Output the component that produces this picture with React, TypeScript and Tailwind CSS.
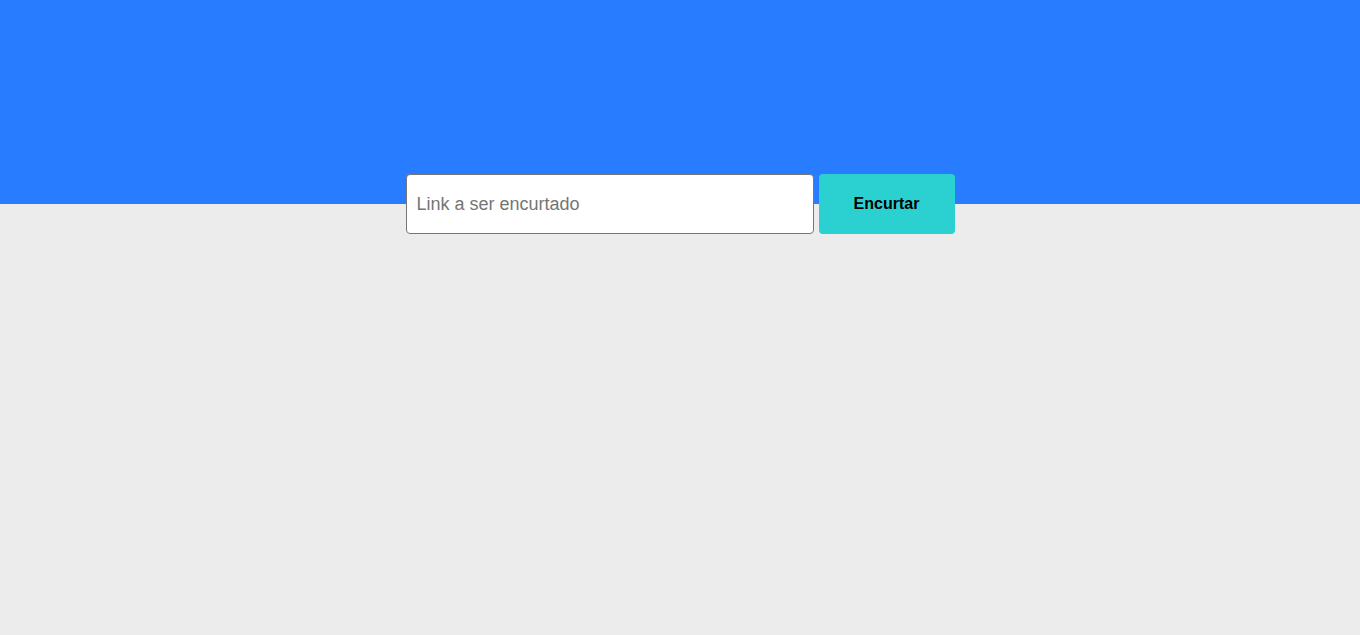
export default function App() {
  return (
    <div className="min-h-[635px] bg-[#ececec] font-['Liberation_Sans',Arial,sans-serif]">
      <header className="h-[204px] bg-[#277cff]" />
      <form
        className="-mt-[30px] flex justify-center gap-[5px]"
        onSubmit={(e) => e.preventDefault()}
      >
        <input
          type="text"
          placeholder="Link a ser encurtado"
          className="h-[60px] w-[408px] rounded-[4px] border border-[#767676] bg-white px-[10px] text-[18px] text-black placeholder:text-[#757575] outline-none"
        />
        <button
          type="submit"
          className="h-[60px] w-[136px] rounded-[4px] bg-[#2bd1d1] text-[16px] font-bold text-black"
        >
          Encurtar
        </button>
      </form>
    </div>
  );
}
